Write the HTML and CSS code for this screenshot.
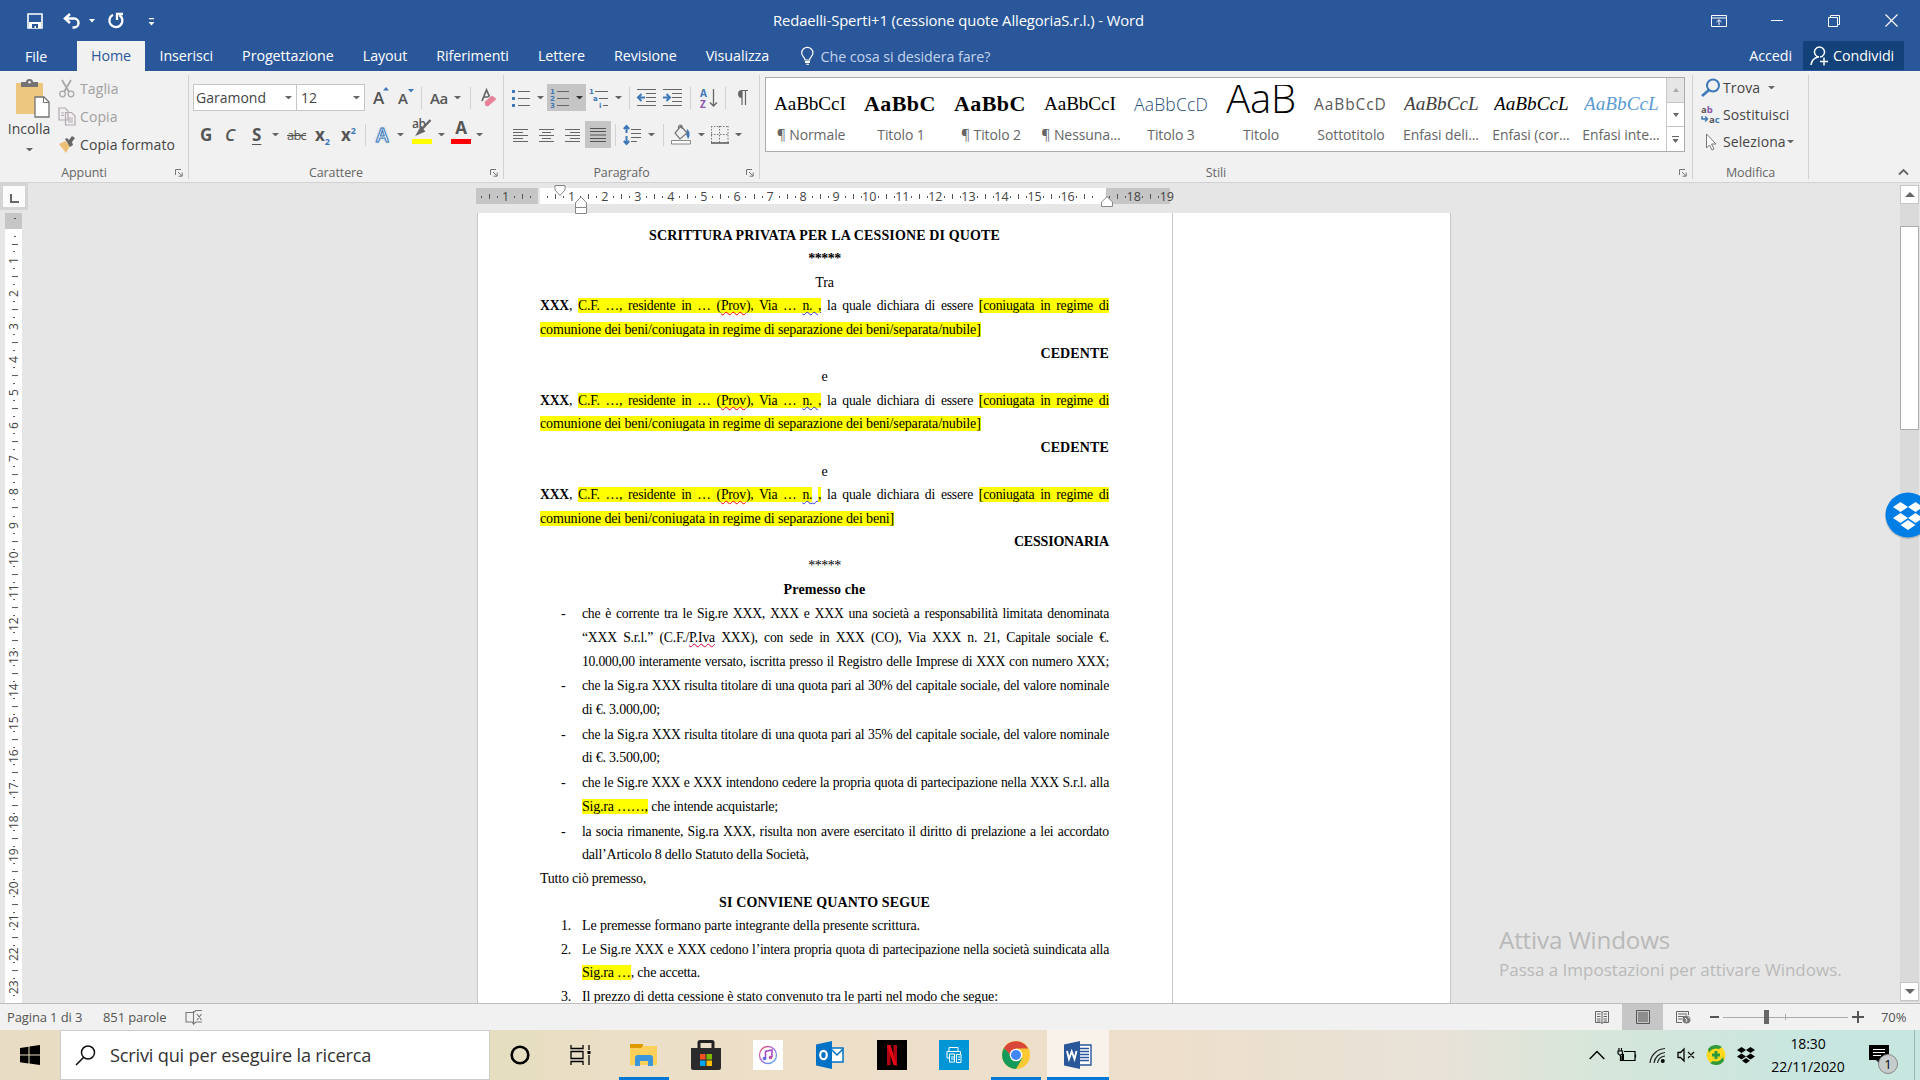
FILE: index.html
```html
<!DOCTYPE html>
<html lang="it">
<head>
    <meta charset="UTF-8">
    <title>Redaelli-Sperti+1 (cessione quote AllegoriaS.r.l.) - Word</title>
    <link rel="stylesheet" href="styles.css">
</head>
<body>
    <div class="titlebar">
        <div class="quick">
            <svg width="16" height="16" viewBox="0 0 16 16"><path d="M1 1h14v14H1z" fill="none" stroke="#fff" stroke-width="1.6"/><path d="M2 9h12v6H2z" fill="#fff"/><path d="M5 11h6v4H9v-2H7.500v2H5z" fill="#2a579a"/></svg>
            <svg class="undo" width="18" height="16" viewBox="0 0 18 16"><path d="M2 5.500h9a4.500 4.500 0 0 1 0 9H9.500M7 1L2 5.500l5 4.500" fill="none" stroke="#fff" stroke-width="2.500"/></svg>
            <svg class="drop" width="6" height="4" viewBox="0 0 6 4"><path d="M0 0h6L3 3.500z" fill="#fff"/></svg>
            <svg class="redo" width="16" height="17" viewBox="0 0 16 17"><path d="M5 2.800A6.500 6.500 0 1 0 11.500 3.200M9 8V2h6" fill="none" stroke="#fff" stroke-width="2.300"/></svg>
            <svg class="custom" width="7" height="8" viewBox="0 0 7 8"><path d="M1 0h5v1.300H1zM0.500 4h6l-3 3.500z" fill="#fff"/></svg>
        </div>
        <div class="doc-title">Redaelli-Sperti+1 (cessione quote AllegoriaS.r.l.) - Word</div>
        <div class="win-buttons">
            <svg width="16" height="12" viewBox="0 0 16 12"><path d="M.5.500h15v11H.5zM.5 3h15M8 10V5M5.500 7L8 4.700 10.500 7" fill="none" stroke="#fff"/></svg>
            <svg width="12" height="12" viewBox="0 0 12 12"><path d="M0 5.500h12" stroke="#fff"/></svg>
            <svg width="12" height="12" viewBox="0 0 12 12"><path d="M.5 2.500h9v9h-9zM2.500 2.500v-2h9v9h-2" fill="none" stroke="#fff"/></svg>
            <svg width="13" height="13" viewBox="0 0 13 13"><path d="M.5.500l12 12M12.500.500l-12 12" stroke="#fff" stroke-width="1.100"/></svg>
        </div>
    </div>

    <div class="tabs">
        <span class="tab file">File</span>
        <span class="tab active">Home</span>
        <span class="tab">Inserisci</span>
        <span class="tab">Progettazione</span>
        <span class="tab">Layout</span>
        <span class="tab">Riferimenti</span>
        <span class="tab">Lettere</span>
        <span class="tab">Revisione</span>
        <span class="tab">Visualizza</span>
        <span class="tell">
            <svg width="13" height="18" viewBox="0 0 13 18"><path d="M4 13c0-3-3.300-3.500-3.300-7a5.600 5.600 0 0 1 11.200 0c0 3.500-3.300 4-3.300 7z" fill="none" stroke="#fff" stroke-width="1.200"/><path d="M4 14h5v2H4zM5 16.800h3v1H5z" fill="#fff"/></svg>
            Che cosa si desidera fare?
        </span>
        <span class="signin">Accedi</span>
        <span class="share">
            <svg width="19" height="20" viewBox="0 0 19 20"><path d="M9 11a5 5 0 1 1 1 0M1 19c.5-4 3-7 7-8M10 15.500h8M14 11.500v8" fill="none" stroke="#fff" stroke-width="1.500"/></svg>
            Condividi
        </span>
    </div>

    <div class="ribbon">
        <div class="group clipboard">
            <div class="controls">
                <div class="paste">
                    <svg width="36" height="40" viewBox="0 0 36 40"><path d="M1 4h27v31H1z" fill="#eec77f"/><path d="M6 8V3h5q0-3 3.500-3T18 3h5v5z" fill="#737373"/><circle cx="14.500" cy="3.200" r="1.300" fill="#f1f1f1"/><path d="M20 18h9l5 5v15H20z" fill="#fff" stroke="#737373" stroke-width="1.300"/><path d="M28.500 18v5.500H34" fill="none" stroke="#737373"/></svg>
                    <span>Incolla</span>
                    <b class="arrow"></b>
                </div>
                <div class="clip-list">
                    <span class="off"><svg width="18" height="19" viewBox="0 0 18 19"><path d="M4 1l7 12M13 1L6 13" stroke="#a9a9a9" stroke-width="1.800"/><circle cx="4.500" cy="15" r="2.800" fill="none" stroke="#a9a9a9" stroke-width="1.300"/><circle cx="13" cy="15" r="2.800" fill="none" stroke="#a9a9a9" stroke-width="1.300"/></svg>Taglia</span>
                    <span class="off"><svg width="18" height="19" viewBox="0 0 18 19"><g fill="#f1f1f1" stroke="#b3a9b3" stroke-width="1.200"><path d="M1 1h6l3 3v9H1zM7.500 5.500h6l3.500 3.500v9H7.500z"/><path d="M3 6h3M3 8.500h3M10 11h5M10 13h5M10 15h5"/></g></svg>Copia</span>
                    <span><svg width="18" height="19" viewBox="0 0 18 19"><path d="M1 9l6-3 5 5-4 7z" fill="#eec077"/><path d="M7 4l2-1 2 2 3-4 3 2-3 4 1 3-3 2z" fill="#666"/></svg>Copia formato</span>
                </div>
            </div>
            <div class="caption">Appunti</div>
            <svg class="launcher" width="8" height="8" viewBox="0 0 8 8"><path d="M.5 6V.500H6M3 3l4 4M7.200 3.500v3.700H3.500" fill="none" stroke="#777"/></svg>
        </div>

        <div class="group font">
            <div class="controls">
                <div class="row">
                    <span class="combo name">Garamond<b class="arrow"></b></span>
                    <span class="combo size">12<b class="arrow"></b></span>
                    <span class="glyph grow">A<svg width="6" height="4" viewBox="0 0 6 4"><path d="M0 3.500L3 0l3 3.500z" fill="#3d78b8"/></svg></span>
                    <span class="glyph shrink">A<svg width="6" height="4" viewBox="0 0 6 4"><path d="M0 0h6L3 3.500z" fill="#3d78b8"/></svg></span>
                    <i class="bar"></i>
                    <span class="glyph case">Aa</span><b class="arrow"></b>
                    <i class="bar b2"></i>
                    <svg class="clear" width="18" height="20" viewBox="0 0 18 20"><path d="M1 13L5.500 2 10 12M2.500 9h6" fill="none" stroke="#666" stroke-width="1.700"/><path d="M3 14l8-7 5 4-9 8-3-1z" fill="#e8829a" stroke="#f1f1f1"/></svg>
                </div>
                <div class="row second">
                    <span class="glyph bold">G</span>
                    <span class="glyph ital">C</span>
                    <span class="glyph under">S</span><b class="arrow"></b>
                    <span class="glyph strike">abc</span>
                    <span class="glyph subs">x<sub>2</sub></span>
                    <span class="glyph sups">x<sup>2</sup></span>
                    <i class="bar"></i>
                    <span class="glyph effect">A</span><b class="arrow"></b>
                    <span class="glyph marker">ab<svg width="16" height="14" viewBox="0 0 16 14"><path d="M14.500 0L5 10M5 8l2.500 3L2 13.500z" fill="#666" stroke="#666" stroke-width="2.400"/></svg></span><b class="arrow"></b>
                    <span class="glyph ink">A</span><b class="arrow"></b>
                </div>
            </div>
            <div class="caption">Carattere</div>
            <svg class="launcher" width="8" height="8" viewBox="0 0 8 8"><path d="M.5 6V.500H6M3 3l4 4M7.200 3.500v3.700H3.500" fill="none" stroke="#777"/></svg>
        </div>

        <div class="group para">
            <div class="controls">
                <div class="row">
                    <svg width="20" height="18" viewBox="0 0 20 18"><path d="M7 2.500h12M7 9.500h12M7 16.500h12" stroke="#666"/><path d="M1 1h3v3H1zM1 8h3v3H1zM1 15h3v3H1z" fill="#3d78b8"/></svg><b class="arrow"></b>
                    <span class="pressed num"><svg width="20" height="22" viewBox="0 0 20 22"><path d="M7 4.500h12M7 11.500h12M7 18.500h12" stroke="#666"/><g class="tiny"><text x="0" y="7">1</text><text x="0" y="14">2</text><text x="0" y="21">3</text></g></svg><b class="arrow dark"></b></span>
                    <svg class="multi" width="20" height="22" viewBox="0 0 20 22"><path d="M6 4.500h13M10 11.500h9M14 18.500h5" stroke="#666"/><g class="tiny"><text x="0" y="7">1</text><text x="4" y="14">a</text><text x="10" y="21">i</text></g></svg><b class="arrow"></b>
                    <i class="bar b3"></i>
                    <svg class="in1" width="19" height="17" viewBox="0 0 19 17"><path d="M0 .500h19M9 4.500h10M9 8.500h10M9 12.500h10M0 16.500h19" stroke="#666"/><path d="M8 8.500H1M4.500 5L1 8.500 4.500 12" fill="none" stroke="#3d78b8" stroke-width="2"/></svg>
                    <svg class="in2" width="19" height="17" viewBox="0 0 19 17"><path d="M0 .500h19M9 4.500h10M9 8.500h10M9 12.500h10M0 16.500h19" stroke="#666"/><path d="M0 8.500h7M3.500 5L7 8.500 3.500 12" fill="none" stroke="#3d78b8" stroke-width="2"/></svg>
                    <i class="bar b4"></i>
                    <svg class="sort" width="18" height="20" viewBox="0 0 18 20"><g class="az"><text x="0" y="9" fill="#3d78b8">A</text><text x="0" y="19.500" fill="#8a56ac">Z</text></g><path d="M13.500 1v17M10 14.500l3.500 3.500 3.500-3.500" fill="none" stroke="#666" stroke-width="1.300"/></svg>
                    <i class="bar b4"></i>
                    <svg class="pil" width="12" height="15" viewBox="0 0 12 15"><path d="M6 0a4 4 0 0 0 0 8z" fill="#666"/><path d="M5 .500h7M6 0v15M9.500 0v15" stroke="#666" stroke-width="1.200"/></svg>
                </div>
                <div class="row second">
                    <svg class="al" width="15" height="14" viewBox="0 0 15 14"><path d="M0 1.500h15M0 4.500h10M0 7.500h15M0 10.500h10M0 13.500h15" stroke="#666"/></svg>
                    <svg class="al" width="15" height="14" viewBox="0 0 15 14"><path d="M0 1.500h15M3 4.500h9M0 7.500h15M3 10.500h9M0 13.500h15" stroke="#666"/></svg>
                    <svg class="al" width="15" height="14" viewBox="0 0 15 14"><path d="M0 1.500h15M5 4.500h10M0 7.500h15M5 10.500h10M0 13.500h15" stroke="#666"/></svg>
                    <span class="pressed just"><svg width="16" height="14" viewBox="0 0 16 14"><path d="M0 .500h16M0 3.500h16M0 7h16M0 10.500h16M0 13.500h16" stroke="#555"/></svg></span>
                    <i class="bar b5"></i>
                    <svg class="spacing" width="19" height="20" viewBox="0 0 19 20"><path d="M8 4.500h10M8 8.500h10M8 12.500h10M8 16.500h6" stroke="#666"/><path d="M3.500 1v7M3.500 11v8M.8 4l2.700-3 2.700 3M.8 16l2.700 3 2.700-3" fill="none" stroke="#3d78b8" stroke-width="2"/></svg><b class="arrow"></b>
                    <i class="bar b6"></i>
                    <svg class="bucket" width="21" height="21" viewBox="0 0 21 21"><path d="M16 5c3 2 3.500 7 1 10l-2-5z" fill="#3d78b8"/><path d="M10 2l6 7-7 6-5-6zM7.500 6V2.500Q9 0 11 2v3" fill="#f1f1f1" stroke="#777" stroke-width="1.200"/><path d="M.5 16.500h19v3.500H.5z" fill="#fff" stroke="#888"/></svg><b class="arrow"></b>
                    <svg class="borders" width="18" height="18" viewBox="0 0 18 18"><path d="M.5 0v17M8.500 0v17M17 0v17M0 .500h17M0 8.500h17" stroke="#777" stroke-dasharray="1.500 1.500"/><path d="M0 17h18" stroke="#555" stroke-width="1.500"/></svg><b class="arrow"></b>
                </div>
            </div>
            <div class="caption">Paragrafo</div>
            <svg class="launcher" width="8" height="8" viewBox="0 0 8 8"><path d="M.5 6V.500H6M3 3l4 4M7.200 3.500v3.700H3.500" fill="none" stroke="#777"/></svg>
        </div>

        <div class="group styles">
            <div class="gallery">
                <div class="style"><div class="sample">AaBbCcI</div><div>¶ Normale</div></div>
                <div class="style"><div class="sample h1">AaBbC</div><div>Titolo 1</div></div>
                <div class="style"><div class="sample h1">AaBbC</div><div>¶ Titolo 2</div></div>
                <div class="style"><div class="sample">AaBbCcI</div><div>¶ Nessuna...</div></div>
                <div class="style"><div class="sample h3">AaBbCcD</div><div>Titolo 3</div></div>
                <div class="style"><div class="sample title">AaB</div><div>Titolo</div></div>
                <div class="style"><div class="sample subtitle">AaBbCcD</div><div>Sottotitolo</div></div>
                <div class="style"><div class="sample em">AaBbCcL</div><div>Enfasi deli...</div></div>
                <div class="style"><div class="sample em black">AaBbCcL</div><div>Enfasi (cor...</div></div>
                <div class="style"><div class="sample em blue">AaBbCcL</div><div>Enfasi inte...</div></div>
                <div class="gallery-nav">
                    <span class="dim"><svg width="6" height="4" viewBox="0 0 6 4"><path d="M0 4h6L3 0z" fill="#aaa"/></svg></span>
                    <span><svg width="6" height="4" viewBox="0 0 6 4"><path d="M0 0h6L3 4z" fill="#666"/></svg></span>
                    <span><svg width="7" height="7" viewBox="0 0 7 7"><path d="M0 0h7v1H0zM.5 3h6l-3 4z" fill="#666"/></svg></span>
                </div>
            </div>
            <div class="caption">Stili</div>
            <svg class="launcher" width="8" height="8" viewBox="0 0 8 8"><path d="M.5 6V.500H6M3 3l4 4M7.200 3.500v3.700H3.500" fill="none" stroke="#777"/></svg>
        </div>

        <div class="group edit">
            <div class="edit-list">
                <span><svg width="20" height="20" viewBox="0 0 20 20"><circle cx="12" cy="7.500" r="6" fill="none" stroke="#3d78b8" stroke-width="2"/><path d="M8 12l-7 6" stroke="#3d78b8" stroke-width="2.600"/></svg>Trova<b class="arrow"></b></span>
                <span><svg width="20" height="20" viewBox="0 0 20 20"><g class="repl"><text x="0" y="8">a<tspan fill="#8a56ac">b</tspan></text><text x="8" y="18">a<tspan fill="#3d78b8">c</tspan></text></g><path d="M1 11v3h5M4 11.500L6.500 14 4 16.500" fill="none" stroke="#3d78b8" stroke-width="1.400"/></svg>Sostituisci</span>
                <span><svg width="20" height="20" viewBox="0 0 20 20"><path d="M5.500 2v14l3-3 2.500 5 2-1-2.500-5H15z" fill="#fff" stroke="#777"/></svg>Seleziona<b class="arrow near"></b></span>
            </div>
            <div class="caption">Modifica</div>
        </div>
        <svg class="collapse" width="11" height="8" viewBox="0 0 11 8"><path d="M1 6.500L5.500 2 10 6.500" fill="none" stroke="#666" stroke-width="1.800"/></svg>
    </div>

    <div class="workspace">
        <div class="side">
            <div class="tabstop"><span><svg width="9" height="9" viewBox="0 0 9 9"><path d="M1 0v8h8" fill="none" stroke="#666" stroke-width="2"/></svg></span></div>
            <div class="vruler"><div class="vpad"></div><div class="vcells" id="vcells"></div></div>
        </div>
        <div class="canvas">
            <div class="hruler">
                <div class="hcells" id="hcells"></div>
                <svg class="mark first" width="12" height="12" viewBox="0 0 12 12"><path d="M1 .500h10v4.500l-5 5.500-5-5.500z" fill="#fff" stroke="#888"/></svg>
                <svg class="mark hang" width="12" height="18" viewBox="0 0 12 18"><path d="M.5 17.500v-11L6 1l5.500 5.500v11zM.5 11.500h11" fill="#fff" stroke="#888"/></svg>
                <svg class="mark right" width="12" height="12" viewBox="0 0 12 12"><path d="M.5 10.500V6L6 .700 11.500 6v4.500z" fill="#fff" stroke="#888"/></svg>
            </div>
            <div class="sheet">
                <div class="page">
                    <p class="c"><b>SCRITTURA PRIVATA PER LA CESSIONE DI QUOTE</b></p>
                    <p class="c"><b class="stars">*****</b></p>
                    <p class="c">Tra</p>
                    <p class="j"><b>XXX</b>, <mark>C.F. …, residente in … (<u>Prov</u>), Via … <u class="gr">n. ,</u></mark> la quale dichiara di essere <mark>[coniugata in regime di</mark></p>
                    <p class="loose"><mark>comunione dei beni/coniugata in regime di separazione dei beni/separata/nubile]</mark></p>
                    <p class="r"><b>CEDENTE</b></p>
                    <p class="c">e</p>
                    <p class="j"><b>XXX</b>, <mark>C.F. …, residente in … (<u>Prov</u>), Via … <u class="gr">n. ,</u></mark> la quale dichiara di essere <mark>[coniugata in regime di</mark></p>
                    <p class="loose"><mark>comunione dei beni/coniugata in regime di separazione dei beni/separata/nubile]</mark></p>
                    <p class="r"><b>CEDENTE</b></p>
                    <p class="c">e</p>
                    <p class="j"><b>XXX</b>, <mark>C.F. …, residente in … (<u>Prov</u>), Via … </mark><u class="gr"><mark>n.</mark> <mark>,</mark></u> la quale dichiara di essere <mark>[coniugata in regime di</mark></p>
                    <p class="loose"><mark>comunione dei beni/coniugata in regime di separazione dei beni]</mark></p>
                    <p class="r"><b class="tight">CESSIONARIA</b></p>
                    <p class="c"><span class="stars">*****</span></p>
                    <p class="c"><b>Premesso che</b></p>
                    <div class="item dash"><span>-</span><div>
                        <p class="j">che è corrente tra le Sig.re XXX, XXX e XXX una società a responsabilità limitata denominata</p>
                        <p class="j">“XXX S.r.l.” (C.F./<u class="dk">P.Iva</u> XXX), con sede in XXX (CO), Via XXX n. 21, Capitale sociale €.</p>
                        <p class="j">10.000,00 interamente versato, iscritta presso il Registro delle Imprese di XXX con numero XXX;</p>
                    </div></div>
                    <div class="item dash"><span>-</span><div>
                        <p class="j">che la Sig.ra XXX risulta titolare di una quota pari al 30% del capitale sociale, del valore nominale</p>
                        <p>di €. 3.000,00;</p>
                    </div></div>
                    <div class="item dash"><span>-</span><div>
                        <p class="j">che la Sig.ra XXX risulta titolare di una quota pari al 35% del capitale sociale, del valore nominale</p>
                        <p>di €. 3.500,00;</p>
                    </div></div>
                    <div class="item dash"><span>-</span><div>
                        <p class="j">che le Sig.re XXX e XXX intendono cedere la propria quota di partecipazione nella XXX S.r.l. alla</p>
                        <p><mark>Sig.ra ……,</mark> che intende acquistarle;</p>
                    </div></div>
                    <div class="item dash"><span>-</span><div>
                        <p class="j">la socia rimanente, Sig.ra XXX, risulta non avere esercitato il diritto di prelazione a lei accordato</p>
                        <p>dall’Articolo 8 dello Statuto della Società,</p>
                    </div></div>
                    <p>Tutto ciò premesso,</p>
                    <p class="c"><b>SI CONVIENE QUANTO SEGUE</b></p>
                    <div class="item"><span>1.</span><div><p class="loose">Le premesse formano parte integrante della presente scrittura.</p></div></div>
                    <div class="item"><span>2.</span><div>
                        <p class="j">Le Sig.re XXX e XXX cedono l’intera propria quota di partecipazione nella società suindicata alla</p>
                        <p><mark>Sig.ra …</mark>, che accetta.</p>
                    </div></div>
                    <div class="item"><span>3.</span><div><p class="loose">Il prezzo di detta cessione è stato convenuto tra le parti nel modo che segue:</p></div></div>
                </div>
                <div class="comments"></div>
            </div>
        </div>
        <div class="scrollbar">
            <span class="sb-btn"><svg width="10" height="5" viewBox="0 0 10 5"><path d="M0 5h10L5 0z" fill="#666"/></svg></span>
            <span class="thumb"></span>
            <span class="sb-btn down"><svg width="10" height="5" viewBox="0 0 10 5"><path d="M0 0h10L5 5z" fill="#666"/></svg></span>
        </div>
        <div class="watermark"><div class="big">Attiva Windows</div><div>Passa a Impostazioni per attivare Windows.</div></div>
        <svg class="dropbox-tab" width="46" height="50" viewBox="0 0 46 50"><circle cx="23" cy="24" r="23" fill="#0a0a0a" opacity=".15"/><circle cx="23" cy="23" r="22.500" fill="#007ee5"/><path d="M15.500 10l7.500 5-7.500 5L8 15zM30.500 10l7.500 5-7.500 5-7.500-5zM15.500 21l7.500 5-7.500 5L8 26zM30.500 21l7.500 5-7.500 5-7.500-5zM23 28l7.500 5-7.500 5-7.500-5z" fill="#fff"/></svg>
    </div>

    <div class="statusbar">
        <span class="pages">Pagina 1 di 3</span>
        <span class="words">851 parole</span>
        <svg class="proof" width="18" height="15" viewBox="0 0 18 15"><path d="M8.500 2.500H1v9.500h6l1.500 2V1M8.500 2.500L11 .500h6M8.500 14l2.500-2h6M12 4l4.500 6M16.500 4L12 10" fill="none" stroke="#777" stroke-width="1.100"/></svg>
        <div class="views">
            <span><svg width="14" height="13" viewBox="0 0 14 13"><path d="M7 1.500L5.500.500h-5v11h5L7 12.500l1.500-1h5V.500h-5zV12M2 3h3.500M2 5.500h3.500M2 8h3.500M8.500 3H12M8.500 5.500H12M8.500 8H12M2 10h3.500M8.500 10H12" fill="none" stroke="#666"/></svg></span>
            <span class="on"><svg width="14" height="14" viewBox="0 0 14 14"><path d="M.5.500h13v13H.5zM2 3h10M2 5h10M2 7h10M2 9h10M2 11h10" fill="none" stroke="#555"/></svg></span>
            <span><svg width="15" height="13" viewBox="0 0 15 13"><path d="M6 11.500H.5V.500h12V4M2 3h9M2 5.500h6M2 8h4" fill="none" stroke="#666"/><circle cx="10.500" cy="8.500" r="4" fill="#777"/><path d="M9 7l2 2-1 2M12 5.500l1.500 2" fill="none" stroke="#eee"/></svg></span>
        </div>
        <div class="zoom">
            <svg width="154" height="16" viewBox="0 0 154 16"><path d="M0 8h9M142 8h12M148 2v12" stroke="#555" stroke-width="2"/><path d="M13 8.500h125M75.500 5v6" stroke="#aaa"/><path d="M54 1h5v14h-5z" fill="#666"/></svg>
            <span>70%</span>
        </div>
    </div>

    <div class="taskbar">
        <div class="start"><svg width="20" height="20" viewBox="0 0 20 20"><path d="M0 3l8.500-1.300V9.500H0zM9.500 1.500L20 0v9.500H9.500zM0 10.500h8.500v8L0 17.300zM9.500 10.500H20V20L9.500 18.600z"/></svg></div>
        <div class="search"><svg width="21" height="21" viewBox="0 0 21 21"><circle cx="13" cy="7.500" r="6.500" fill="none" stroke="#111" stroke-width="1.500"/><path d="M8.500 12.500L1 20" stroke="#111" stroke-width="1.600"/></svg>Scrivi qui per eseguire la ricerca</div>
        <div class="slot sys"><svg width="20" height="20" viewBox="0 0 20 20"><circle cx="10" cy="10" r="8.300" fill="none" stroke="#000" stroke-width="2.600"/></svg></div>
        <div class="slot sys"><svg width="21" height="20" viewBox="0 0 21 20"><path d="M1 0v3.500h12V0M1 20v-3.500h12V20M1 6.500h12v7H1zM19 0v5M19 10v10" fill="none" stroke="#000" stroke-width="1.300"/><path d="M17.500 6h3v3h-3z"/></svg></div>
        <div class="apps">
            <div class="slot run"><svg width="28" height="28" viewBox="0 0 28 28"><path d="M0 3h13v6H0z" fill="#dd9b00"/><path d="M0 7h11l2-2h14v19H0z" fill="#fdd05a"/><path d="M5 25V17q0-3 3-3h12q3 0 3 3v8h-5v-5h-8v5z" fill="#3c96dc"/></svg></div>
            <div class="slot"><svg width="30" height="30" viewBox="0 0 30 30"><path d="M8 9V2.500Q8 1.500 9 1.500h12q1 0 1 1V9" fill="none" stroke="#222" stroke-width="3"/><path d="M0 8h30v20q0 2-2 2H2q-2 0-2-2z" fill="#2b2b2b"/><path d="M9 14h5.500v5.500H9z" fill="#f25022"/><path d="M15.500 14H21v5.500h-5.500z" fill="#7fba00"/><path d="M9 20.500h5.500V26H9z" fill="#00a4ef"/><path d="M15.500 20.500H21V26h-5.500z" fill="#ffb900"/></svg></div>
            <div class="slot"><svg width="30" height="30" viewBox="0 0 30 30"><defs><linearGradient id="it" x1="0" y1="0" x2="1" y2="1"><stop offset="0" stop-color="#f04a6a"/><stop offset=".5" stop-color="#a86be0"/><stop offset="1" stop-color="#40b8f0"/></linearGradient></defs><path d="M0 0h30v30H0z" fill="#fff"/><circle cx="15" cy="15" r="8.500" fill="none" stroke="url(#it)" stroke-width="1.300"/><path d="M12.500 18.500v-7l6.500-1.500v7" fill="none" stroke="#a14fc0" stroke-width="1.600"/><circle cx="11.500" cy="18.500" r="1.800" fill="#5b6bea"/><circle cx="17.500" cy="17.500" r="1.800" fill="#c04fa8"/></svg></div>
            <div class="slot"><svg width="28" height="28" viewBox="0 0 28 28"><path d="M14 7h13v14H14z" fill="#fff" stroke="#0072c6" stroke-width="1.500"/><path d="M15 8l6 6 6-6" fill="none" stroke="#0072c6" stroke-width="1.500"/><path d="M0 3.500L16 0v28L0 24.500z" fill="#0072c6"/><ellipse cx="7.500" cy="14" rx="3.300" ry="4.200" fill="none" stroke="#fff" stroke-width="2.200"/></svg></div>
            <div class="slot"><svg width="30" height="30" viewBox="0 0 30 30"><path d="M0 0h30v30H0z"/><path d="M10 5h3.500v20l-3.500.500zM16.500 5H20v20.500l-3.500-.5z" fill="#b1060f"/><path d="M10 5h3.500L20 25.500l-3.500-.5z" fill="#e50914"/></svg></div>
            <div class="slot"><svg width="30" height="30" viewBox="0 0 30 30"><path d="M0 0h30v30H0z" fill="#0096d6"/><path d="M10 11V7.500h9V11M10.500 18H8v-6.500h13.500V14M10.500 14h5v8h-5zM17.500 14.500h4.500v8h-4.500zM12 17h3M12 19h3M19 17h2M19 19.500h2" fill="none" stroke="#fff" stroke-width="1"/></svg></div>
            <div class="slot run"><svg width="28" height="28" viewBox="0 0 28 28"><circle cx="14" cy="14" r="14" fill="#fbc934"/><path d="M14 14L1.900 7A14 14 0 0 0 14 28l6-10.500z" fill="#149a5b"/><path d="M1.900 7A14 14 0 0 1 26.200 7.500H14l-6 6z" fill="#d9463a"/><circle cx="14" cy="14" r="6.300" fill="#fff"/><circle cx="14" cy="14" r="5" fill="#4285f4"/></svg></div>
            <div class="slot run current"><svg width="28" height="28" viewBox="0 0 28 28"><path d="M14 4h13v20H14z" fill="#fff" stroke="#2a579a" stroke-width="1.400"/><path d="M16 7.500h9M16 10.500h9M16 13.500h9M16 16.500h9M16 19.500h9" stroke="#2a579a" stroke-width="1.400"/><path d="M0 3.500L16 0v28L0 24.500z" fill="#2a579a"/><path d="M3 10l2 8 2.700-7.500L10.500 18l2-8" fill="none" stroke="#fff" stroke-width="1.900"/></svg></div>
        </div>
        <div class="tray">
            <svg width="16" height="10" viewBox="0 0 16 10"><path d="M.7 9L8 1.500 15.300 9" fill="none" stroke="#000" stroke-width="1.400"/></svg>
            <svg class="t1" width="20" height="14" viewBox="0 0 20 14"><path d="M7 3.500h11v9H5V8M18.500 6.500v3M1 3h4.500v2.500L4 7H2.500L1 5.500zM2 0v3M4.500 0v3M3.500 7v5.500h2" fill="none" stroke="#000" stroke-width="1.200"/><path d="M5 6h2v6H5z"/></svg>
            <svg class="t2" width="17" height="17" viewBox="0 0 17 17"><g fill="none" stroke="#222" stroke-width="1.200"><path d="M1 16A16 16 0 0 1 16 1.500M5 16A12 12 0 0 1 16 5.500M8.500 16A8.500 8.500 0 0 1 16 9"/></g><circle cx="13.800" cy="14" r="2"/></svg>
            <svg class="t3" width="19" height="14" viewBox="0 0 19 14"><path d="M1 4.500h2.500L7 1v12L3.500 9.500H1zM11 4l6 6M17 4l-6 6" fill="none" stroke="#000" stroke-width="1.300"/></svg>
            <svg class="t4" width="20" height="20" viewBox="0 0 20 20"><circle cx="10" cy="10" r="9.500" fill="#ffd91e"/><path d="M2 4A10 10 0 0 1 16 2L13 4A8 8 0 0 0 3 8zM18 16A10 10 0 0 1 4 18L7 16A8 8 0 0 0 17 12zM8.500 6h3v2.500H14v3h-2.500V14h-3v-2.500H6v-3h2.500z" fill="#2e9a3a"/></svg>
            <svg class="t5" width="18" height="17" viewBox="0 0 18 17"><path d="M4.500 0L9 3 4.500 6 0 3zM13.500 0L18 3l-4.500 3L9 3zM4.500 6.500L9 9.500l-4.500 3-4.500-3zM13.500 6.500l4.500 3-4.500 3-4.500-3zM9 11l4 2.800L9 16.500l-4-2.700z"/></svg>
            <div class="clock"><div>18:30</div><div>22/11/2020</div></div>
            <div class="notes">
                <svg width="20" height="20" viewBox="0 0 20 20"><path d="M0 0h20v15H11v4l-4-4H0z"/><path d="M4 4.500h12M4 7.500h12M4 10.500h8" stroke="#fff" stroke-width="1.200"/></svg>
                <span class="badge">1</span>
            </div>
        </div>
    </div>
    <script>
        // ruler numbers, one cell per centimetre
        const h = document.getElementById('hcells');
        for (let i = -1; i <= 19; i++) {
            h.innerHTML += `<span>${i === 0 || i === 17 ? '' : Math.abs(i)}</span>`;
        }
        const v = document.getElementById('vcells');
        for (let i = 1; i <= 23; i++) {
            v.innerHTML += `<span>${i}</span>`;
        }
    </script>
</body>
</html>
```
FILE: styles.css
```css
* { margin: 0; padding: 0; box-sizing: border-box; }
body { width: 1920px; height: 1080px; overflow: hidden; font-family: "Open Sans", "Noto Sans", sans-serif; font-size: 14px; color: #444; background: #e6e6e6; display: flex; flex-direction: column; white-space: nowrap; }
svg { display: block; flex: none; overflow: visible; }

.titlebar { height: 41px; background: #2a579a; color: #fff; display: flex; align-items: center; position: relative; flex: none; }
.quick { display: flex; align-items: center; padding-left: 27px; width: 400px; height: 38px; }
.undo { margin-left: 20px; }
.drop { margin-left: 8px; }
.redo { margin-left: 13px; }
.custom { margin-left: 24px; margin-top: 2px; }
.doc-title { flex: 1; text-align: center; height: 41px; line-height: 40px; font-size: 14.8px; letter-spacing: -0.1px; }
.win-buttons { width: 403px; padding-right: 22px; display: flex; justify-content: flex-end; align-items: center; gap: 45px; height: 38px; }
.win-buttons svg:first-child { margin-right: -1px; }

.tabs { height: 30px; background: #2a579a; color: #fff; display: flex; flex: none; line-height: 29px; font-size: 14.3px; letter-spacing: -0.08px; }
.tab { padding: 0 14.5px; }
.tab.file { padding: 1px 0 0 25px; width: 77px; }
.tab.active { background: #f1f1f1; color: #2a579a; width: 68px; padding: 0; text-align: center; }
.tell { display: flex; align-items: center; gap: 7px; padding-left: 17px; color: #c3d3ec; }
.signin { margin-left: auto; padding-right: 11px; }
.share { width: 101px; height: 29px; margin-right: 16px; background: #134179; display: flex; align-items: center; gap: 4px; padding-left: 7px; }

.ribbon { height: 112px; flex: none; background: #f1f1f1; border-bottom: 1px solid #d2d2d2; display: flex; position: relative; }
.group { position: relative; height: 104px; margin-top: 4px; border-right: 1px solid #d2d2d2; }
.caption { position: absolute; left: 0; right: 0; top: 89px; text-align: center; font-size: 12.5px; line-height: 18px; letter-spacing: -0.1px; color: #666; }
.launcher { position: absolute; right: 5px; top: 94px; }
.arrow { display: inline-block; border: 3.500px solid transparent; border-top-color: #666; border-bottom: 0; width: 7px; height: 4px; flex: none; }
.arrow.dark { border-top-color: #333; }
.row { display: flex; align-items: center; height: 27px; }
.row.second { margin-top: 10px; }
.bar { width: 1px; height: 22px; background: #d2d2d2; flex: none; }

.clipboard { width: 189px; }
.clipboard .controls { display: flex; }
.clipboard .caption { right: 20px; }
.paste { width: 58px; display: flex; flex-direction: column; align-items: center; padding-top: 4px; }
.paste svg { margin-left: 7px; }
.paste span { line-height: 20px; margin-bottom: 9px; }
.clip-list { display: flex; flex-direction: column; margin-top: -1px; }
.clip-list span { display: flex; align-items: center; gap: 4px; height: 28px; letter-spacing: 0.1px; }
.clip-list .off { color: #a0a0a0; }

.font { width: 315px; padding: 9px 0 0 4px; }
.font .caption { right: 20px; left: -15px; padding-left: 15px; }
.combo { height: 27px; background: #fff; border: 1px solid #c6c6c6; display: flex; align-items: center; justify-content: space-between; padding: 0 4px 0 2px; }
.combo.name { width: 104px; }
.combo.size { width: 69px; margin-left: -1px; padding-left: 4px; }
.glyph { position: relative; color: #555; flex: none; }
.grow { width: 14px; margin-left: 8px; font-size: 17px; font-weight: 600; }
.grow svg, .shrink svg { position: absolute; left: 10px; top: 1px; }
.shrink { width: 14px; margin-left: 11px; font-size: 15px; font-weight: 600; }
.shrink + .bar { margin-left: 9px; }
.case { width: 20px; margin: 0 4px 0 8px; font-size: 15px; font-weight: 600; letter-spacing: -0.5px; }
.b2 { margin-left: 9px; }
.clear { margin-left: 10px; }
.font .second .glyph { font-size: 17px; line-height: 24px; font-weight: 700; }
.bold { margin-left: 7px; width: 13px; }
.font .second .ital { margin-left: 12px; width: 13px; font-style: italic; font-weight: 600; }
.under { margin-left: 14px; width: 10px; text-decoration: underline; text-underline-offset: 3px; }
.under + .arrow { margin-left: 10px; }
.font .second .strike { margin-left: 8px; width: 21px; font-size: 13px; font-weight: 400; text-decoration: line-through; letter-spacing: -0.8px; }
.subs { margin-left: 7px; width: 17px; }
.sups { margin-left: 9px; width: 17px; }
.subs sub, .sups sup { font-size: 9px; color: #3d78b8; line-height: 0; }
.sups + .bar { margin-left: 7px; }
.font .second .effect { margin-left: 10px; width: 16px; font-size: 19px; font-weight: 600; color: #fff; -webkit-text-stroke: 1px #3d78b8; text-shadow: 0 0 3px #7db4ea; }
.effect + .arrow { margin-left: 5px; }
.font .second .marker { margin-left: 8px; width: 20px; height: 27px; font-size: 12px; font-weight: 600; line-height: 14px; border-bottom: 5px solid #ff0; letter-spacing: -0.5px; }
.marker svg { position: absolute; left: 4px; top: 3px; }
.marker + .arrow { margin-left: 6px; }
.font .second .ink { margin-left: 6px; width: 20px; height: 27px; line-height: 22px; text-align: center; border-bottom: 5px solid #f00; }
.ink + .arrow { margin-left: 5px; }
.row.second .marker, .row.second .ink { margin-top: -8px; }

.para { width: 256px; padding: 9px 0 0 7px; }
.para .caption { right: 20px; }
.para .row > .arrow { margin-left: 6px; }
.pressed { background: #c5c5c5; height: 27px; display: flex; align-items: center; }
.num { width: 39px; margin-left: 3px; padding-left: 3px; gap: 6px; }
.tiny { font: bold 7px "DejaVu Sans", sans-serif; fill: #3d78b8; }
.az { font: bold 10px "Open Sans", sans-serif; }
.multi { margin-left: 3px; }
.b3 { margin-left: 7px; }
.in1 { margin-left: 7px; }
.in2 { margin-left: 7px; }
.b4 { margin-left: 8px; }
.sort { margin-left: 9px; }
.sort + .b4 { margin-left: 7px; }
.pil { margin-left: 10px; }
.al { margin: 0 9px 0 2px; }
.just { width: 26px; justify-content: center; margin-left: -4px; }
.b5 { margin-left: 4px; }
.spacing { margin-left: 7px; }
.b6 { margin-left: 8px; }
.bucket { margin-left: 7px; }
.borders { margin-left: 6px; }

.styles { width: 933px; }
.gallery { margin: 2px 0 0 5px; width: 920px; height: 75px; background: #fff; border: 1px solid #ababab; display: flex; }
.styles .caption { left: 0; right: 20px; }
.style { width: 90px; text-align: center; font-size: 14px; color: #666; padding-top: 7px; overflow: hidden; line-height: 20px; flex: none; letter-spacing: -0.1px; }
.sample { height: 38px; line-height: 37px; margin: 0 7px 2px 8px; overflow: hidden; text-align: left; font-family: "Liberation Serif", serif; font-size: 19.2px; color: #000; }
.sample.h1 { font-weight: bold; font-size: 22px; line-height: 37px; letter-spacing: 0.4px; }
.sample.h3 { font-family: "Open Sans", sans-serif; font-weight: 300; font-size: 17.5px; line-height: 39px; letter-spacing: 0.2px; color: #1f4d78; }
.sample.title { font-family: "Open Sans", sans-serif; font-weight: 300; font-size: 40px; line-height: 26px; margin-left: 4px; margin-right: 4px; letter-spacing: -0.2px; text-align: center; }
.sample.subtitle { font-family: "Open Sans", sans-serif; font-size: 15.5px; line-height: 39px; color: #5a5a5a; letter-spacing: 0.9px; }
.sample.em { font-style: italic; color: #404040; letter-spacing: 0; }
.sample.em.black { color: #000; }
.sample.em.blue { color: #5b9bd5; }
.gallery-nav { width: 18px; display: flex; flex-direction: column; border-left: 1px solid #c6c6c6; }
.gallery-nav span { flex: 1; display: flex; align-items: center; justify-content: center; border-bottom: 1px solid #c6c6c6; }
.gallery-nav span:last-child { border-bottom: 0; }
.gallery-nav .dim { background: #e6e6e6; }

.edit { width: 116px; }
.edit .caption { left: 0; right: 0; }
.edit-list { margin-top: -1px; padding: 0 0 0 8px; }
.edit-list span { display: flex; align-items: center; height: 27px; gap: 2px; letter-spacing: 0.1px; }
.edit-list .arrow { margin-left: 6px; }
.edit-list .near { margin-left: -1px; }
.repl { font: bold 9.5px "Open Sans", sans-serif; fill: #555; }
.collapse { position: absolute; right: 11px; top: 97px; }

.workspace { height: 821px; flex: none; display: flex; position: relative; border-bottom: 1px solid #bdbdbd; overflow: hidden; }
.side { width: 28px; }
.tabstop { width: 28px; height: 27px; background: #d4d4d4; padding: 3px 0 0 3px; }
.tabstop span { display: flex; width: 22px; height: 21px; background: #fbfbfb; align-items: flex-end; justify-content: center; padding-bottom: 4px; }
.vruler { margin: 3px 0 0 5px; width: 17px; height: 790px; background: #fff; overflow: hidden; font-size: 12px; }
.vpad { height: 16px; background: linear-gradient(#555, #555) 9px 5px / 2px 1px no-repeat, #c6c6c6; }
.vcells { padding-top: 15px; background: linear-gradient(#555, #555) 9px 7px / 2px 1px no-repeat, linear-gradient(#555, #555) 7px 15px / 6px 1px no-repeat; }
.vcells span { display: block; width: 17px; height: 33.07px; line-height: 17px; text-align: center; writing-mode: vertical-rl; transform: rotate(180deg); background: linear-gradient(#555, #555) 7px 8px / 2px 1px no-repeat, linear-gradient(#555, #555) 7px 25px / 2px 1px no-repeat, linear-gradient(#555, #555) 4px 0 / 6px 1px no-repeat; }

.canvas { width: 1872px; }
.hruler { position: relative; margin: 5px 0 0 448px; width: 694px; height: 16px; font-size: 12.5px; overflow: visible; background: linear-gradient(#555, #555) 5px 8px / 1px 2px no-repeat, linear-gradient(90deg, #c6c6c6 62px, #e6e6e6 62px, #e6e6e6 64px, #fff 64px, #fff 630px, #c6c6c6 630px); }
.hcells { display: flex; padding-left: 13px; }
.hcells span { width: 33.07px; height: 16px; line-height: 17px; text-align: center; flex: none; background: linear-gradient(#555, #555) 8px 8px / 1px 2px no-repeat, linear-gradient(#555, #555) 25px 8px / 1px 2px no-repeat, linear-gradient(#555, #555) 0 6px / 1px 5px no-repeat; }
.hcells span:last-child { background-size: 1px 2px, 0 0, 1px 5px; }
.mark { position: absolute; }
.first { left: 78px; top: -3px; }
.hang { left: 99px; top: 8px; }
.right { left: 625px; top: 8px; }

.sheet { display: flex; margin: 9px 0 0 449px; width: 974px; height: 790px; background: #fff; border-right: 1px solid #c6c6c6; }
.page { width: 696px; height: 790px; overflow: hidden; border-left: 1px solid #c6c6c6; border-right: 1px solid #c6c6c6; padding: 10.5px 63px 0 62px; font-family: "Liberation Serif", serif; font-size: 14px; letter-spacing: -0.22px; line-height: 23.62px; color: #000; }
.page p { height: 23.62px; }
.page .loose { letter-spacing: -0.13px; }
.c { text-align: center; }
.r { text-align: right; }
.c b, .r b { letter-spacing: 0.13px; }
.c .stars { letter-spacing: -0.5px; }
.r .tight { letter-spacing: -0.2px; }
.page .j { text-align: justify; text-align-last: justify; font-size: 13.7px; }
.page mark { background: #ff0; color: #000; }
.page u { text-decoration: underline wavy #f00 1px; text-underline-offset: 1px; }
.page u.gr { text-decoration-color: #2a2ae0; }
.page u.dk { text-decoration-color: #d0003c; }
.item { display: flex; padding-left: 21px; }
.item.dash { padding-top: 1.2px; }
.item > span { width: 21px; flex: none; }
.item > div { flex: 1; min-width: 0; }

.scrollbar { width: 19px; margin-top: 2px; height: 817px; background: #dadada; }
.sb-btn { display: flex; width: 19px; height: 19px; background: #fff; border: 1px solid #c6c6c6; align-items: center; justify-content: center; }
.thumb { display: block; height: 204px; margin-top: 22px; background: #fff; border: 1px solid #ababab; }
.sb-btn.down { margin-top: 552px; }
.watermark { position: absolute; left: 1499px; top: 740px; font-size: 17px; line-height: 26px; color: #b9b9b9; }
.watermark .big { font-size: 24.2px; line-height: 34px; letter-spacing: -0.15px; }
.dropbox-tab { position: absolute; left: 1885px; top: 309px; }

.statusbar { height: 26px; flex: none; background: #f1f1f1; display: flex; align-items: center; font-size: 13px; letter-spacing: -0.12px; color: #555; padding-left: 7px; }
.pages { width: 96px; }
.words { width: 82px; }
.views { display: flex; margin-left: 1378px; height: 26px; }
.views span { width: 41px; display: flex; align-items: center; justify-content: center; }
.views .on { background: #c6c6c6; }
.zoom { display: flex; align-items: center; gap: 17px; margin-left: 6px; }

.taskbar { height: 50px; flex: none; display: flex; background: linear-gradient(90deg, #e9dcc4 0, #e5dec0 490px, #ecdfc8 640px, #eddfca 1150px, #e8e2d8 1440px, #d6e6da 1600px, #c9e6e0 1800px, #c6e6df 1920px); color: #000; }
.start { width: 60px; display: flex; align-items: center; justify-content: center; }
.search { width: 430px; background: #fff; border: 1px solid #ccc; display: flex; align-items: center; gap: 14px; padding-left: 14px; font-size: 18.2px; letter-spacing: -0.2px; color: #333; }
.slot { width: 62px; display: flex; align-items: center; justify-content: center; }
.slot.sys { width: 60px; }
.apps { display: flex; padding-left: 3px; }
.run { border-bottom: 3px solid #0078d7; width: 50px; margin: 0 6px; padding-top: 3px; }
.run.current { width: 62px; margin: 0; background: #f8f2ea; }
.tray { margin-left: auto; display: flex; align-items: center; padding-right: 5px; margin-right: 5px; border-right: 1px solid #9cb8b2; }
.t1 { margin-left: 12px; }
.t2 { margin-left: 12px; }
.t3 { margin-left: 11px; }
.t4 { margin-left: 10px; }
.t5 { margin-left: 11px; }
.clock { width: 92px; margin-left: 7px; text-align: center; font-size: 14px; line-height: 23px; letter-spacing: -0.1px; }
.notes { position: relative; width: 40px; margin-left: 15px; }
.badge { position: absolute; left: 9px; top: 9px; width: 20px; height: 20px; border-radius: 50%; border: 1px solid #888; background: #c5cccb; font-size: 13px; line-height: 18px; text-align: center; }
```
